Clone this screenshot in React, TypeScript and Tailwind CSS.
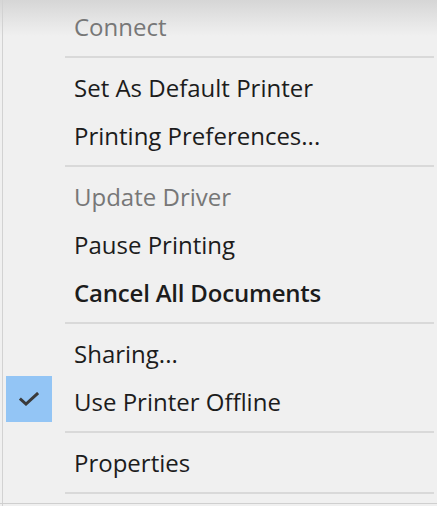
import React from 'react';

type Entry =
  | { kind: 'item'; label: string; disabled?: boolean; checked?: boolean; strong?: boolean }
  | { kind: 'sep' };

const entries: Entry[] = [
  { kind: 'item', label: 'Connect', disabled: true },
  { kind: 'sep' },
  { kind: 'item', label: 'Set As Default Printer' },
  { kind: 'item', label: 'Printing Preferences...' },
  { kind: 'sep' },
  { kind: 'item', label: 'Update Driver', disabled: true },
  { kind: 'item', label: 'Pause Printing' },
  { kind: 'item', label: 'Cancel All Documents', strong: true },
  { kind: 'sep' },
  { kind: 'item', label: 'Sharing...' },
  { kind: 'item', label: 'Use Printer Offline', checked: true },
  { kind: 'sep' },
  { kind: 'item', label: 'Properties' },
  { kind: 'sep' },
];

const Check = () => (
  <svg width="20" height="14" viewBox="0 0 20 14" fill="none">
    <path d="M2 7.5 L7 12 L18 2" stroke="#3a3a3a" strokeWidth="3" strokeLinecap="square" />
  </svg>
);

export default function App() {
  return (
    <div
      className="relative w-[437px] h-[506px] overflow-hidden bg-[#f0f0f0]"
      style={{ fontFamily: '"Open Sans", "Noto Sans", sans-serif' }}
    >
      {/* shading at the top edge */}
      <div className="absolute inset-x-0 top-0 h-[36px] bg-gradient-to-b from-[#d6d6d6] to-[#f0f0f0]" />
      {/* frame lines */}
      <div className="absolute left-[2px] top-0 bottom-0 w-[1px] bg-[#d2d2d2]" />
      <div className="absolute left-0 right-0 top-[503px] h-[1px] bg-[#cfcfcf]" />

      <div className="relative flex flex-col pt-[3px]">
        {entries.map((e, i) =>
          e.kind === 'sep' ? (
            <div key={i} className="h-[13px] pl-[65px] pr-[3px] pt-[5px]">
              <div className="h-[2px] bg-[#d9d9d9]" />
            </div>
          ) : (
            <div key={i} className="relative flex h-[48px] items-center pl-[74px]">
              {e.checked && (
                <div className="absolute left-[6px] top-[-2px] flex h-[46px] w-[46px] items-center justify-center bg-[#93c5f5]">
                  <Check />
                </div>
              )}
              <span
                className={
                  'text-[24px] leading-none ' +
                  (e.strong ? 'font-semibold tracking-[-0.2px] ' : 'font-medium ') +
                  (e.disabled ? 'text-[#777777]' : 'text-[#1c1c1c]')
                }
              >
                {e.label}
              </span>
            </div>
          )
        )}
      </div>
    </div>
  );
}
